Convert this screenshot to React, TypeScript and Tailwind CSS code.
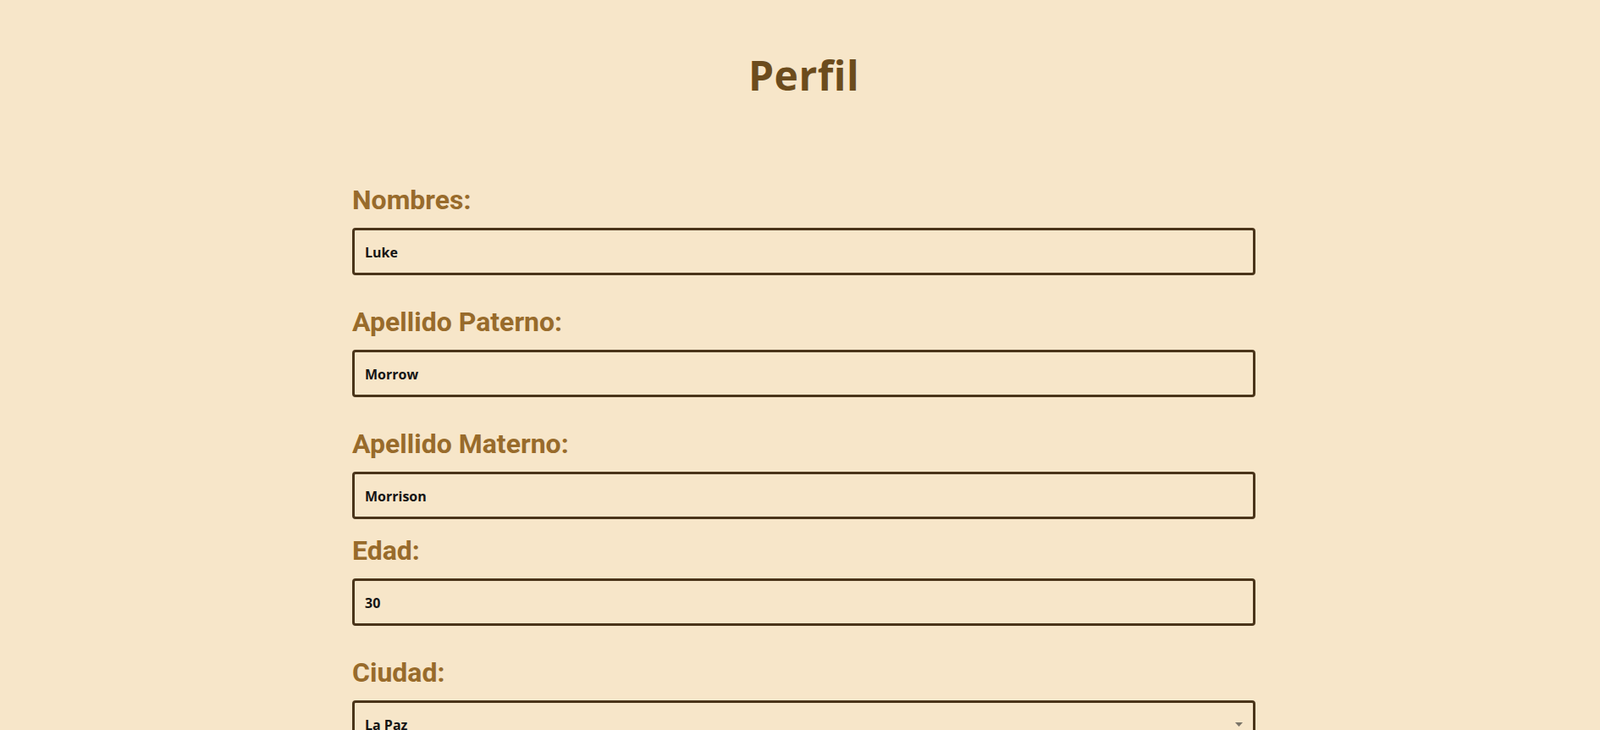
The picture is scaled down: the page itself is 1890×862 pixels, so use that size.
import { useState } from 'react';

const labelCls =
  "block text-[32px] leading-[38px] font-bold text-[#986b2b] mb-[14px] font-['Roboto','Liberation_Sans',sans-serif]";
const boxCls =
  "block w-full h-[56px] rounded-[4px] border-[3px] border-[#4a3419] bg-transparent px-[12px] pt-[2px] text-[16px] font-bold text-[#141414] outline-none font-['Open_Sans','Liberation_Sans',sans-serif]";

export default function App() {
  const [nombres, setNombres] = useState('Luke');
  const [paterno, setPaterno] = useState('Morrow');
  const [materno, setMaterno] = useState('Morrison');
  const [edad, setEdad] = useState('30');
  const [ciudad, setCiudad] = useState('La Paz');

  return (
    <div className="min-h-screen bg-[#f7e6c9] pt-[53px] pb-10">
      <div className="ml-[416px] w-[1067px]">
        <h1 className="text-center text-[48px] font-bold tracking-[0.5px] text-[#6c4c1d] font-['Open_Sans','Liberation_Sans',sans-serif]">
          Perfil
        </h1>

        <form className="mt-[92px]">
          <div className="mb-[36px]">
            <label className={labelCls}>Nombres:</label>
            <input className={boxCls} value={nombres} onChange={(e) => setNombres(e.target.value)} />
          </div>

          <div className="mb-[36px]">
            <label className={labelCls}>Apellido Paterno:</label>
            <input className={boxCls} value={paterno} onChange={(e) => setPaterno(e.target.value)} />
          </div>

          <div className="mb-[18px]">
            <label className={labelCls}>Apellido Materno:</label>
            <input className={boxCls} value={materno} onChange={(e) => setMaterno(e.target.value)} />
          </div>

          <div className="mb-[36px]">
            <label className={labelCls}>Edad:</label>
            <input className={boxCls} value={edad} onChange={(e) => setEdad(e.target.value)} />
          </div>

          <div>
            <label className={labelCls}>Ciudad:</label>
            <div className="relative">
              <select
                className={boxCls + ' appearance-none'}
                value={ciudad}
                onChange={(e) => setCiudad(e.target.value)}
              >
                <option>La Paz</option>
                <option>Cochabamba</option>
                <option>Santa Cruz</option>
              </select>
              <svg
                className="pointer-events-none absolute right-[15px] top-[26px]"
                width="9"
                height="5"
                viewBox="0 0 9 5"
              >
                <path d="M0 0h9L4.5 5z" fill="#7a7468" />
              </svg>
            </div>
          </div>
        </form>
      </div>
    </div>
  );
}
